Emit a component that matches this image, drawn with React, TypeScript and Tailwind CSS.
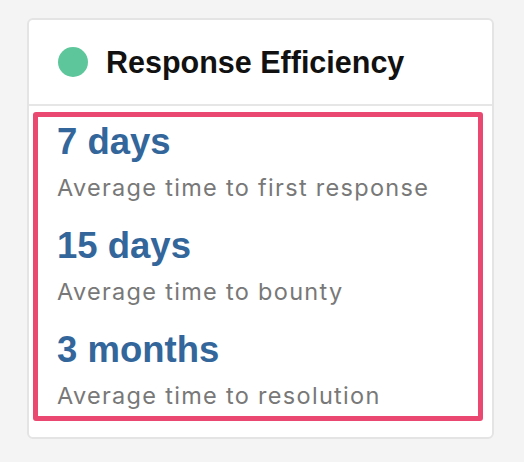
const stats = [
  { value: '7 days', label: 'Average time to first response' },
  { value: '15 days', label: 'Average time to bounty' },
  { value: '3 months', label: 'Average time to resolution' },
];

const App = () => {
  return (
    <div className="min-h-[462px] w-[524px] bg-[#f4f4f4] pt-[18px] pl-[27px] font-['Liberation_Sans',Arial,sans-serif]">
      <div className="w-[467px] h-[421px] rounded-[6px] border-2 border-[#e4e4e4] bg-white">
        {/* Header */}
        <div className="flex items-center h-[84px] pl-[29px]">
          <span className="w-[30px] h-[30px] rounded-full bg-[#5dc79b]" />
          <h2 className="ml-[18px] text-[30.5px] leading-none font-bold text-[#111]">Response Efficiency</h2>
        </div>
        <div className="h-[2px] bg-[#e6e6e6]" />

        {/* Highlighted stats */}
        <div className="mt-[6px] ml-[4px] w-[450px] rounded-[3px] border-[5px] border-[#ea4870] pl-[19px] pt-[3px] pb-[6px] flex flex-col gap-[22px]">
          {stats.map((s) => (
            <div key={s.value}>
              <div className="text-[36.5px] leading-[44px] font-bold text-[#33669a]">{s.value}</div>
              <div className="mt-[10px] font-['Inter',sans-serif] text-[23.5px] leading-[28px] tracking-[1.3px] text-[#787878]">{s.label}</div>
            </div>
          ))}
        </div>
      </div>
    </div>
  );
};

export default App;
